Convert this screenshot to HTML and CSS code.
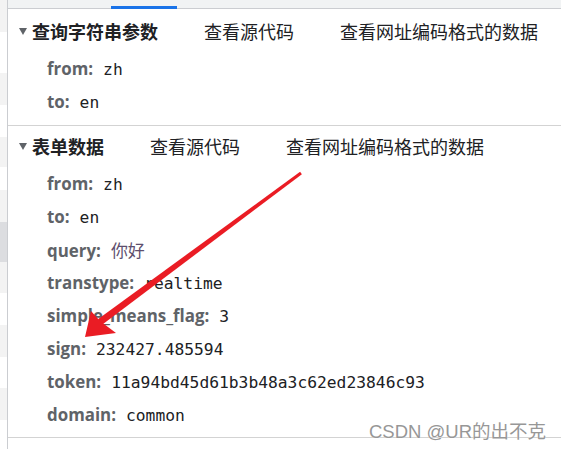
FILE: index.html
```html
<!DOCTYPE html>
<html lang="zh">
<head>
    <meta charset="UTF-8">
    <title>表单数据</title>
    <link rel="stylesheet" href="styles.css">
</head>
<body>
    <div class="page">
        <!-- 左侧请求列表的边缘 -->
        <div class="sidebar">
            <div class="band grey h32"></div>
            <div class="band h41"></div>
            <div class="band grey h32"></div>
            <div class="band h32"></div>
            <div class="band grey h30"></div>
            <div class="band h23"></div>
            <div class="band grey h32"></div>
            <div class="band dark h40"></div>
            <div class="band grey h31"></div>
            <div class="band h32"></div>
            <div class="band grey h32"></div>
            <div class="band h31"></div>
            <div class="band grey h32"></div>
        </div>

        <div class="main">
            <div class="tabbar">
                <div class="tab-indicator"></div>
            </div>

            <div class="section first">
                <div class="section-header">
                    <span class="triangle"></span>
                    <span class="section-title">查询字符串参数</span>
                    <span class="header-link">查看源代码</span>
                    <span class="header-link">查看网址编码格式的数据</span>
                </div>
                <div class="rows">
                    <div class="row"><span class="key">from:</span><span class="val">zh</span></div>
                    <div class="row"><span class="key">to:</span><span class="val">en</span></div>
                </div>
            </div>

            <div class="section">
                <div class="section-header">
                    <span class="triangle"></span>
                    <span class="section-title">表单数据</span>
                    <span class="header-link">查看源代码</span>
                    <span class="header-link">查看网址编码格式的数据</span>
                </div>
                <div class="rows">
                    <div class="row"><span class="key">from:</span><span class="val">zh</span></div>
                    <div class="row"><span class="key">to:</span><span class="val">en</span></div>
                    <div class="row"><span class="key">query:</span><span class="val cjk">你好</span></div>
                    <div class="row"><span class="key">transtype:</span><span class="val">realtime</span></div>
                    <div class="row"><span class="key">simple_means_flag:</span><span class="val">3</span></div>
                    <div class="row"><span class="key">sign:</span><span class="val">232427.485594</span></div>
                    <div class="row"><span class="key">token:</span><span class="val">11a94bd45d61b3b48a3c62ed23846c93</span></div>
                    <div class="row"><span class="key">domain:</span><span class="val">common</span></div>
                </div>
            </div>
        </div>

        <!-- 标注箭头 -->
        <svg class="arrow" width="561" height="449" viewBox="0 0 561 449">
            <polygon points="300.1,171.8 301.9,174.2 102.1,324.8 97.9,319.2" fill="#ea1c24"/>
            <polygon points="85,337 91,311 100,321 116,333" fill="#ea1c24"/>
        </svg>

        <div class="watermark">CSDN @UR的出不克</div>
    </div>
</body>
</html>
```

FILE: styles.css
```css
body {
    margin: 0;
    background-color: #fff;
    font-family: "Noto Sans", "Noto Sans CJK SC", sans-serif;
    color: #202124;
}
.page {
    position: relative;
    width: 561px;
    height: 449px;
    overflow: hidden;
    display: flex;
}
.sidebar {
    width: 7px;
    border-right: 1px solid #cbcdd1;
    display: flex;
    flex-direction: column;
}
.band {
    flex-shrink: 0;
}
.band.grey {
    background-color: #f3f3f3;
}
.band.dark {
    background-color: #dcdde0;
}
.h23 { height: 23px; }
.h30 { height: 30px; }
.h31 { height: 31px; }
.h32 { height: 32px; }
.h40 { height: 40px; }
.h41 { height: 41px; }
.main {
    flex: 1;
}
.tabbar {
    height: 8px;
    background-color: #f1f3f4;
    border-bottom: 1px solid #cbcdd1;
    position: relative;
}
.tab-indicator {
    position: absolute;
    left: 103px;
    bottom: -1px;
    width: 66px;
    height: 3px;
    background-color: #1a73e8;
}
.section {
    border-bottom: 1px solid #d3d3d3;
    padding: 6px 0 6px 0;
}
.section.first {
    padding: 8px 0 7px 0;
}
.section-header {
    display: flex;
    align-items: center;
    height: 28px;
    padding-left: 11px;
    font-family: "Noto Sans CJK SC", sans-serif;
    font-size: 18px;
}
.triangle {
    width: 0;
    height: 0;
    border-left: 4.5px solid transparent;
    border-right: 4.5px solid transparent;
    border-top: 7px solid #5f6368;
    margin-right: 5px;
}
.section-title {
    font-weight: bold;
}
.header-link {
    margin-left: 46px;
}
.rows {
    padding-top: 7px;
}
.row {
    height: 33px;
    line-height: 33px;
    padding-left: 39px;
    white-space: nowrap;
}
.key {
    font-family: "Open Sans", "Noto Sans", sans-serif;
    font-weight: bold;
    font-size: 16.9px;
    color: #5f6368;
    margin-right: 10px;
}
.val {
    font-family: "DejaVu Sans Mono", monospace;
    font-size: 16.3px;
    color: #202124;
}
.val.cjk {
    font-family: "Noto Sans CJK SC", serif;
    color: #5e4f6e;
    font-size: 17px;
}
.arrow {
    position: absolute;
    left: 0;
    top: 0;
}
.watermark {
    position: absolute;
    left: 369px;
    top: 417px;
    font-family: "Liberation Sans", "Noto Sans CJK SC", sans-serif;
    font-size: 18.5px;
    color: #979797;
    text-shadow: 0 0 1px #fff;
    white-space: nowrap;
}
```
